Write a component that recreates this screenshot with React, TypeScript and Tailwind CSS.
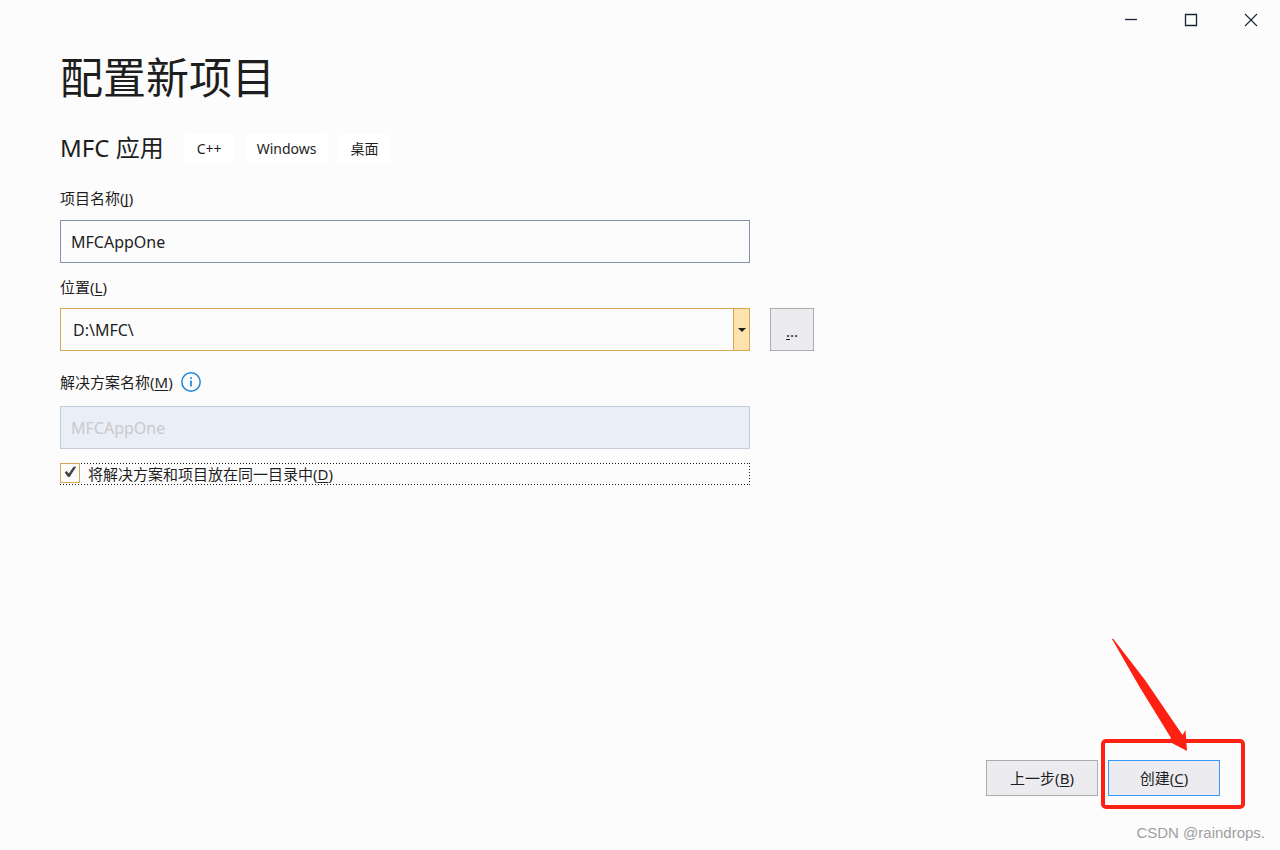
import { useState } from "react";
import type { ReactNode } from "react";

const TAGS = ["C++", "Windows", "桌面"];

const LOCATIONS = ["D:\\MFC\\", "C:\\Projects\\"];

function Mnemonic({ text, accessKey }: { text: string; accessKey: string }) {
  return (
    <>
      {text}(<span className="underline underline-offset-2 [text-decoration-skip-ink:none]">{accessKey}</span>)
    </>
  );
}

function CaptionButton({ label, children }: { label: string; children: ReactNode }) {
  return (
    <button type="button" aria-label={label} className="flex h-10 w-[60px] items-center justify-center text-[#1a2238]">
      <svg width="16" height="14" viewBox="0 0 16 14" fill="none" stroke="currentColor">
        {children}
      </svg>
    </button>
  );
}

export default function App() {
  const [name, setName] = useState("MFCAppOne");
  const [location, setLocation] = useState(LOCATIONS[0]);
  const [sameDir, setSameDir] = useState(true);

  return (
    <div className="relative flex min-h-screen flex-col bg-[#fcfcfc] font-['Noto_Sans','Noto_Sans_CJK_SC',sans-serif] text-[15px] text-[#1e1e1e]">
      {/* Caption bar */}
      <header className="flex justify-end">
        <CaptionButton label="最小化">
          <path d="M3 6.500h12" strokeWidth="1.300" />
        </CaptionButton>
        <CaptionButton label="最大化">
          <path d="M3.500 1.500h11v11h-11z" strokeWidth="1.300" />
        </CaptionButton>
        <CaptionButton label="关闭">
          <path d="M3 1l12 12M15 1L3 13" strokeWidth="1.100" />
        </CaptionButton>
      </header>

      <main className="flex flex-1 flex-col px-[60px] pt-2">
        <h1 className="text-[43px] leading-[60px] font-normal">配置新项目</h1>

        <div className="mt-6 flex h-8 items-center gap-5">
          <h2 className="text-2xl font-normal">MFC 应用</h2>
          <ul className="flex gap-[10px]">
            {TAGS.map((tag) => (
              <li key={tag} className="min-w-[51px] rounded bg-white px-3 pt-px text-center text-sm leading-7">
                {tag}
              </li>
            ))}
          </ul>
        </div>

        <form className="flex flex-col" onSubmit={(e) => e.preventDefault()}>
          <label htmlFor="project" className="mt-[22px] leading-6">
            <Mnemonic text="项目名称" accessKey="J" />
          </label>
          <input
            id="project"
            value={name}
            onChange={(e) => setName(e.target.value)}
            className="mt-[10px] h-[43px] w-full max-w-[690px] border border-[#8591a8] bg-[#fcfcfc] px-[10px] text-base outline-none"
          />

          <label htmlFor="location" className="mt-3 leading-6">
            <Mnemonic text="位置" accessKey="L" />
          </label>
          <div className="mt-[9px] flex gap-5">
            <div className="relative w-full max-w-[690px]">
              <select
                id="location"
                value={location}
                onChange={(e) => setLocation(e.target.value)}
                className="h-[43px] w-full appearance-none border border-[#d4a857] bg-[#fcfcfc] px-3 text-base outline-none"
              >
                {LOCATIONS.map((l) => (
                  <option key={l}>{l}</option>
                ))}
              </select>
              <span className="pointer-events-none absolute inset-y-0 right-0 flex w-[17px] items-center justify-center border border-[#d4a857] bg-[#fde2b0]">
                <svg width="8" height="4" viewBox="0 0 8 4" fill="#1e1e1e">
                  <path d="M0 0h8L4 4z" />
                </svg>
              </span>
            </div>
            <button type="button" aria-label="浏览" className="h-[43px] w-11 shrink-0 border border-[#acacac] bg-[#ececf0] pt-1">
              <span className="underline underline-offset-2">.</span>..
            </button>
          </div>

          <div className="mt-[19px] flex items-center gap-2">
            <label htmlFor="solution" className="leading-6">
              <Mnemonic text="解决方案名称" accessKey="M" />
            </label>
            <svg width="20" height="20" viewBox="0 0 20 20" fill="none" stroke="#1c86d8">
              <circle cx="10" cy="10" r="9.200" strokeWidth="1.500" />
              <path d="M10 8.500v6M10 5.200v1.800" strokeWidth="1.700" />
            </svg>
          </div>
          <input
            id="solution"
            value={name}
            disabled
            className="mt-3 h-[43px] w-full max-w-[690px] border border-[#c6cbd8] bg-[#eaeef6] px-[10px] text-base text-[#c8cacd]"
          />

          {/* Focus ring: one pixel on, two off, on each side */}
          <label className="mt-[14px] flex h-[22px] w-full max-w-[690px] items-center gap-2 bg-[image:repeating-linear-gradient(90deg,#1e1e1e_0_1px,transparent_1px_3px),repeating-linear-gradient(90deg,#1e1e1e_0_1px,transparent_1px_3px),repeating-linear-gradient(180deg,#1e1e1e_0_1px,transparent_1px_3px),repeating-linear-gradient(180deg,#1e1e1e_0_1px,transparent_1px_3px)] bg-[length:100%_1px,100%_1px,1px_100%,1px_100%] bg-[position:left_top,left_bottom,left_top,right_top] bg-no-repeat">
            <span className="relative flex h-5 w-5 shrink-0 self-start">
              <input
                type="checkbox"
                checked={sameDir}
                onChange={(e) => setSameDir(e.target.checked)}
                className="h-5 w-5 appearance-none border border-[#d4a857]"
              />
              {sameDir && (
                <svg className="pointer-events-none absolute inset-0" width="20" height="20" viewBox="0 0 20 20" fill="#424242">
                  <path d="M4.800 9.600l1.900-1.500 2.100 2.300 4.700-6.600h2.700L9.600 14H8z" />
                </svg>
              )}
            </span>
            <span className="pt-px">
              <Mnemonic text="将解决方案和项目放在同一目录中" accessKey="D" />
            </span>
          </label>
        </form>
      </main>

      <footer className="flex justify-end gap-[10px] px-[60px] pb-[54px]">
        <button type="button" className="h-9 w-28 border border-[#acacac] bg-[#ececf0]">
          <Mnemonic text="上一步" accessKey="B" />
        </button>
        <div className="relative">
          <button type="button" className="h-9 w-28 border border-[#3399ff] bg-[#ececf0]">
            <Mnemonic text="创建" accessKey="C" />
          </button>
          {/* Highlight box and arrow over the create button */}
          <div className="pointer-events-none absolute -top-[21px] -left-[7px] h-[70px] w-36 rounded-[5px] border-4 border-[#ff2014]" />
          <svg
            className="pointer-events-none absolute -top-[122px] left-1"
            width="78"
            height="116"
            viewBox="0 0 78 116"
            fill="#ff2014"
          >
            <path d="M0 1l1-.6L33 42L70.500 97l3-5L75 113L56 103l3-3L27 48z" />
          </svg>
        </div>
      </footer>

      <p className="absolute right-[15px] bottom-[7px] text-[15px] leading-5 text-[#a0a0a0] font-['Liberation_Sans',sans-serif]">
        CSDN @raindrops.
      </p>
    </div>
  );
}
